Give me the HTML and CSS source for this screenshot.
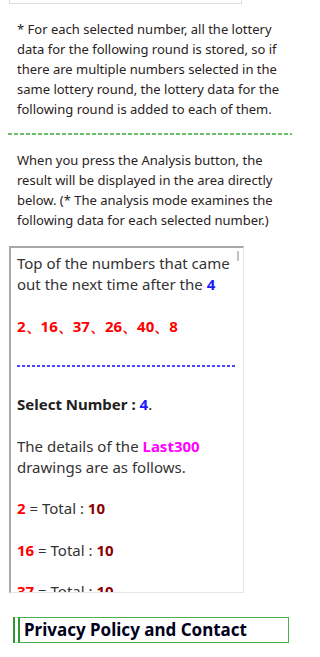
FILE: index.html
```html
<!DOCTYPE html>
<html lang="en">
<head>
<meta charset="utf-8">
<link rel="stylesheet" href="styles.css">
</head>
<body>
<div class="page">
  <div class="prevbox"></div>
  <p class="note">* For each selected number, all the lottery data for the following round is stored, so if there are multiple numbers selected in the same lottery round, the lottery data for the following round is added to each of them.</p>
  <div class="green-rule"></div>
  <p class="note note2">When you press the Analysis button, the result will be displayed in the area directly below. (* The analysis mode examines the following data for each selected number.)</p>
  <div class="result">
    <div class="thumb"></div>
    <div class="line">Top of the numbers that came out the next time after the <b class="blue">4</b></div>
    <div class="line gap nums">2、16、37、26、40、8</div>
    <div class="blue-rule"></div>
    <div class="line sel"><b>Select Number : </b><b class="blue">4</b>.</div>
    <div class="line gap">The details of the <b class="magenta">Last300</b> drawings are as follows.</div>
    <div class="line gap2"><b class="red">2</b> = Total : <b class="dark">10</b></div>
    <div class="line gap"><b class="red">16</b> = Total : <b class="dark">10</b></div>
    <div class="line gap2"><b class="red">37</b> = Total : <b class="dark">10</b></div>
  </div>
  <h2 class="heading">Privacy Policy and Contact</h2>
</div>
</body>
</html>
```
FILE: styles.css
```css
html, body {
  margin: 0;
  padding: 0;
  background: #ffffff;
}
body {
  font-family: "Noto Sans", "Liberation Sans", sans-serif;
  color: #333333;
  width: 300px;
  height: 657px;
  overflow: hidden;
}
.page {
  padding: 0 8px;
}
.prevbox {
  margin-left: 1px;
  width: 231px;
  height: 3px;
  border: 1px solid #dddddd;
  border-top: none;
}
.note {
  margin: 15px 0 0 0;
  padding: 0 6px 0 9px;
  font-size: 13px;
  line-height: 20px;
  color: #2a2222;
}
.green-rule {
  margin-top: 14px;
  height: 2px;
  background: repeating-linear-gradient(to right, #6abf6a 0 4px, transparent 4px 6px);
}
.note2 {
  margin-top: 15px;
}
.result {
  position: relative;
  margin: 16px 0 0 1px;
  width: 226px;
  height: 339px;
  padding: 5px 0 0 6px;
  border-top: 2px solid #a8a8a8;
  border-left: 2px solid #a8a8a8;
  border-right: 1px solid #e6e6e6;
  border-bottom: 1px solid #e6e6e6;
  overflow: hidden;
  font-size: 15px;
  line-height: 21px;
  color: #333333;
}
.thumb {
  position: absolute;
  top: 3px;
  right: 4px;
  width: 2px;
  height: 10px;
  background: #c2c2c2;
}
.line {
  padding-right: 4px;
}
.gap {
  margin-top: 21px;
}
.gap2 {
  margin-top: 20px;
}
.nums {
  color: #ff0000;
  font-weight: bold;
}
.blue-rule {
  margin: 28px 0 0 0;
  width: 219px;
  height: 2px;
  background: repeating-linear-gradient(to right, #4646ff 0 3px, transparent 3px 5px);
}
.sel {
  margin-top: 27px;
  color: #222222;
}
.blue {
  color: #1a1aff;
}
.red {
  color: #ff0000;
}
.magenta {
  color: #ff00ff;
}
.dark {
  color: #8b0000;
}
.heading {
  margin: 24px 3px 0 5px;
  padding: 0 0 0 4px;
  height: 24px;
  font-size: 17px;
  line-height: 24px;
  font-weight: bold;
  color: #00001a;
  border: 1px solid #4cae4c;
  border-left: 7px double #2f9a2f;
}
```
